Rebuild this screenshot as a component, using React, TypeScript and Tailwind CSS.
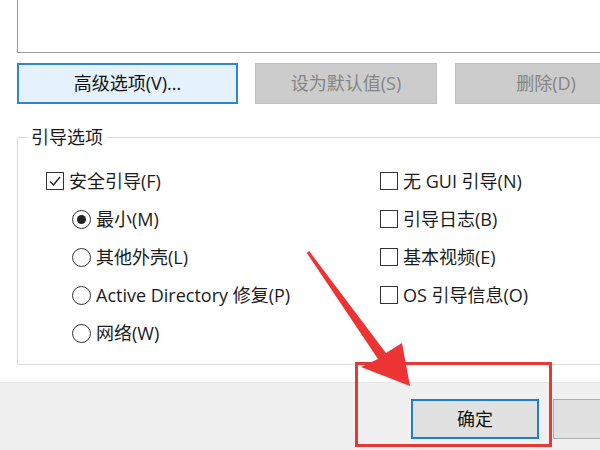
import React from 'react';

const font = "font-['Segoe_UI','Open_Sans','Noto_Sans_CJK_SC',sans-serif]";

const CheckBox: React.FC<{ checked?: boolean; label: string }> = ({ checked, label }) => (
    <div className="flex items-center h-[38px] gap-[5px]">
        <div className="w-[18px] h-[18px] border-[1.5px] border-[#333] bg-white flex items-center justify-center shrink-0">
            {checked && (
                <svg width="14" height="14" viewBox="0 0 14 14">
                    <path d="M2 7.5 L5.5 11 L12 3" fill="none" stroke="#222" strokeWidth="1.4" />
                </svg>
            )}
        </div>
        <span className="text-[18px] text-[#1b1b1b] leading-none whitespace-nowrap">{label}</span>
    </div>
);

const Radio: React.FC<{ checked?: boolean; label: string }> = ({ checked, label }) => (
    <div className="flex items-center h-[38px] gap-[5px]">
        <div className="w-[19px] h-[19px] rounded-full border-[1.5px] border-[#333] bg-white flex items-center justify-center shrink-0">
            {checked && <div className="w-[9px] h-[9px] rounded-full bg-[#222]" />}
        </div>
        <span className="text-[18px] text-[#1b1b1b] leading-none whitespace-nowrap">{label}</span>
    </div>
);

export default function App() {
    return (
        <div className={`relative w-[600px] h-[450px] overflow-hidden bg-white flex flex-col ${font}`}>
            {/* list box (top cut off) */}
            <div className="ml-[17px] w-[640px] h-[53px] border-l border-b border-[#9a9a9a] bg-white shrink-0" />

            {/* buttons row */}
            <div className="flex mt-[10px] ml-[17px] w-[640px] gap-[17px] shrink-0">
                <button className="w-[221px] h-[41px] border-2 border-[#2f86cf] bg-[#e5f1fb] text-[18px] text-[#111] shrink-0">
                    高级选项(V)...
                </button>
                <button className="w-[182px] h-[41px] border border-[#bfbfbf] bg-[#cccccc] text-[18px] text-[#858585] shrink-0">
                    设为默认值(S)
                </button>
                <button className="ml-px w-[182px] h-[41px] border border-[#bfbfbf] bg-[#cccccc] text-[18px] text-[#858585] shrink-0">
                    删除(D)
                </button>
            </div>

            {/* boot options */}
            <fieldset className="mt-[23px] ml-[17px] w-[640px] min-w-[640px] border border-[#dcdcdc] pb-[12px] shrink-0">
                <legend className="ml-[10px] px-[3px] text-[18px] leading-[20px] text-[#1b1b1b]">引导选项</legend>
                <div className="flex pt-[15px]">
                    <div className="w-[362px] pl-[28px] shrink-0">
                        <CheckBox checked label="安全引导(F)" />
                        <div className="pl-[26px]">
                            <Radio checked label="最小(M)" />
                            <Radio label="其他外壳(L)" />
                            <Radio label="Active Directory 修复(P)" />
                            <Radio label="网络(W)" />
                        </div>
                    </div>
                    <div className="shrink-0">
                        <CheckBox label="无 GUI 引导(N)" />
                        <CheckBox label="引导日志(B)" />
                        <CheckBox label="基本视频(E)" />
                        <CheckBox label="OS 引导信息(O)" />
                    </div>
                </div>
            </fieldset>

            {/* footer */}
            <div className="mt-[17px] flex-1 bg-[#f0f0f0] border-t border-[#e6e6e6] flex pt-[16px] pl-[411px] gap-[14px]">
                <button className="w-[128px] h-[40px] border-2 border-[#1e7fd0] bg-[#e1e1e1] text-[18px] text-[#111] shrink-0">
                    确定
                </button>
                <button className="w-[128px] h-[40px] border border-[#adadad] bg-[#e1e1e1] shrink-0" />
            </div>

            {/* annotation */}
            <div className="absolute left-[355px] top-[362px] w-[197px] h-[85px] border-[3px] border-[#e53935]" />
            <svg className="absolute left-0 top-0 pointer-events-none" width="600" height="450">
                <polygon
                    points="309.2,251.1 386,353 402,343 410,386 361,367 378,359 306.8,252.9"
                    fill="#ec3434"
                />
            </svg>
        </div>
    );
}
